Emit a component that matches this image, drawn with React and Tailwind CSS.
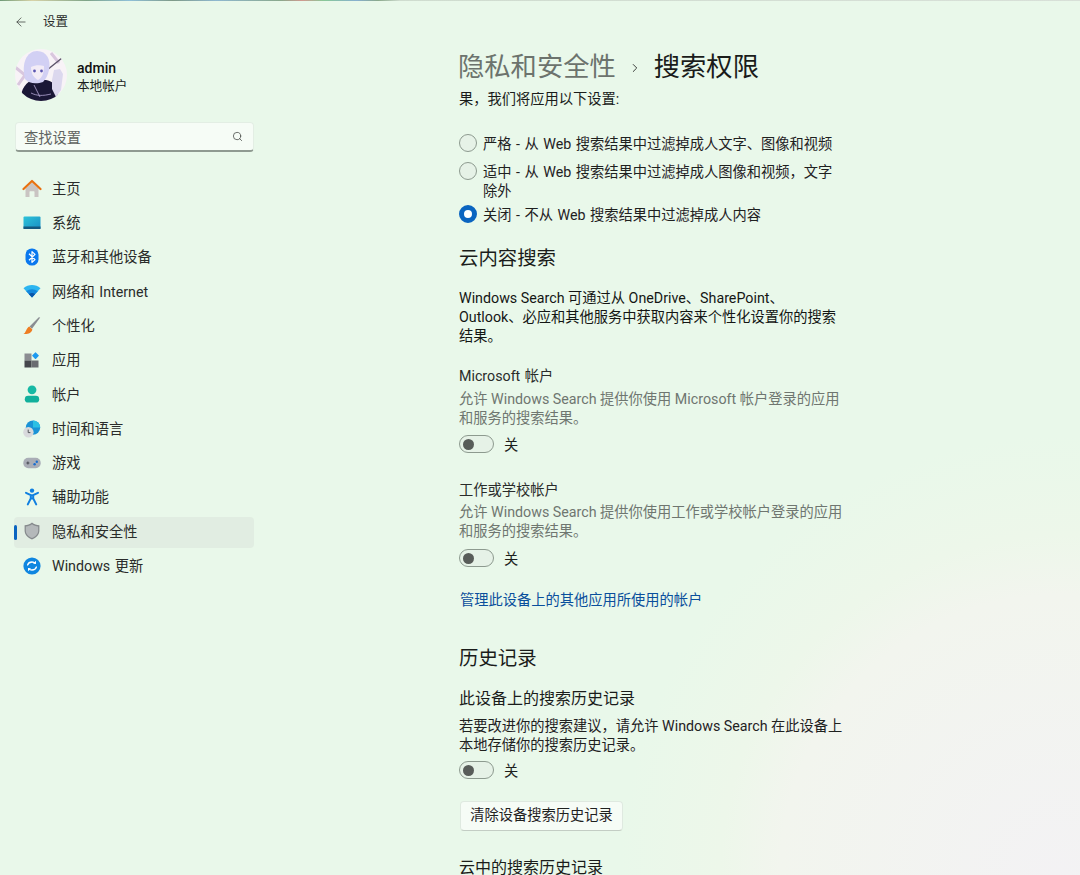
import React from "react";
import { ArrowLeft, ChevronRight, Search } from "lucide-react";

const HomeIcon = () => (
  <svg width="20" height="20" viewBox="0 0 20 20">
    <path d="M3.5 9.5 10 3.5l6.5 6V18h-4.2v-5.5H7.7V18H3.5z" fill="#c9c4c2" />
    <path d="M7.7 12.5h4.6V18H7.7z" fill="#e9f8ea" />
    <path d="M1.5 10 10 2l8.5 8" fill="none" stroke="#e8700f" strokeWidth="2.2" strokeLinecap="round" strokeLinejoin="round" />
  </svg>
);

const SystemIcon = () => (
  <svg width="18" height="14" viewBox="0 0 18 14">
    <defs>
      <linearGradient id="sysg" x1="0" y1="0" x2="1" y2="1">
        <stop offset="0" stopColor="#2cc3d9" />
        <stop offset="1" stopColor="#1a8fc4" />
      </linearGradient>
    </defs>
    <rect x="0.5" y="0.5" width="17" height="12.5" rx="1" fill="url(#sysg)" />
    <rect x="0.5" y="10.5" width="17" height="2.5" fill="#14587f" />
  </svg>
);

const BluetoothIcon = () => (
  <svg width="14" height="18" viewBox="0 0 14 18">
    <rect x="0.5" y="0.5" width="13" height="17" rx="6.3" fill="#0a78ee" />
    <path d="M4 5.8 10 11.6 7 14.4V3.6l3 2.8-6 5.8" fill="none" stroke="#fff" strokeWidth="1.2" strokeLinejoin="round" />
  </svg>
);

const WifiIcon = () => (
  <svg width="18" height="14" viewBox="0 0 18 14">
    <path d="M0.500 4.200C5.300 0 12.700 0 17.500 4.200L9 13.500z" fill="#2cb5f0" />
    <path d="M3.200 7.200c3.400-2.700 8.200-2.700 11.600 0L9 13.500z" fill="#1488dc" />
    <path d="M5.800 10c2-1.300 4.400-1.300 6.400 0L9 13.500z" fill="#0b55a8" />
  </svg>
);

const BrushIcon = () => (
  <svg width="18" height="18" viewBox="0 0 18 18">
    <path d="M17.200 0.500 15.800 0.300 6.600 9.400 9 11.800z" fill="#8a8d92" />
    <path d="M6.200 9.400 9.400 12.400C8.600 15.600 5 17.600 0.400 17 3 15.800 3.200 11 6.200 9.400z" fill="#ee7d22" />
  </svg>
);

const AppsIcon = () => (
  <svg width="16" height="16" viewBox="0 0 16 16">
    <rect x="0.500" y="1.500" width="7" height="7" fill="#8b8d92" />
    <rect x="0.500" y="8.500" width="7" height="7" fill="#45474c" />
    <rect x="7.500" y="8.500" width="7" height="7" fill="#6a6c71" />
    <rect x="9" y="1.200" width="5" height="5" rx="0.500" fill="#1d9af0" transform="rotate(45 11.500 3.700)" />
  </svg>
);

const AccountIcon = () => (
  <svg width="16" height="18" viewBox="0 0 16 18">
    <circle cx="8" cy="4.800" r="4.400" fill="#17b9a4" />
    <rect x="0.800" y="10.800" width="14.400" height="6.800" rx="3.400" fill="#12b09c" />
  </svg>
);

const TimeIcon = () => (
  <svg width="18" height="18" viewBox="0 0 18 18">
    <circle cx="10" cy="7.600" r="7.200" fill="#1b93d6" />
    <path d="M10 .4a7.200 7.200 0 0 1 7.200 7.200H10z" fill="#2cc0e4" />
    <circle cx="5.400" cy="12.200" r="5.200" fill="#d8d9dc" />
    <path d="M5.200 9.600v3h2.200" fill="none" stroke="#55585c" strokeWidth="1" />
  </svg>
);

const GameIcon = () => (
  <svg width="18" height="12" viewBox="0 0 18 12">
    <rect x="0.300" y="0.800" width="17.400" height="10.400" rx="5" fill="#a9adb6" />
    <path d="M3.400 6h3M4.900 4.500v3" stroke="#45484f" strokeWidth="1" />
    <circle cx="11.600" cy="7.200" r="1.200" fill="#1a6fd0" />
    <circle cx="13.800" cy="4.800" r="1.200" fill="#1a6fd0" />
  </svg>
);

const AccessIcon = () => (
  <svg width="16" height="18" viewBox="0 0 16 18">
    <circle cx="8" cy="2.600" r="2.200" fill="#0f7fe0" />
    <path d="M2 4.800 6.800 7.200v3.200L3.800 16.400M14 4.800 9.200 7.200v3.200l3 6M6.800 7.200h2.400v3.200H6.800z" fill="none" stroke="#0f7fe0" strokeWidth="2" strokeLinecap="round" strokeLinejoin="round" />
  </svg>
);

const ShieldIcon = () => (
  <svg width="16" height="18" viewBox="0 0 16 18">
    <path d="M8 .6C10.200 2.400 12.600 3.200 15.400 3.200V8.600c0 4.200-3.200 7.300-7.400 8.800C3.800 15.900.6 12.800.6 8.600V3.200C3.400 3.200 5.800 2.400 8 .6z" fill="#85898c" />
    <path d="M8 2.200C10 3.600 12 4.300 14.200 4.400V8.600c0 3.500-2.600 6-6.200 7.500C4.400 14.600 1.800 12.100 1.800 8.600V4.400C4 4.300 6 3.600 8 2.200z" fill="#b4b8ba" />
  </svg>
);

const UpdateIcon = () => (
  <svg width="18" height="18" viewBox="0 0 18 18">
    <circle cx="9" cy="9" r="8.600" fill="#0f86e0" />
    <path d="M4.600 8c.6-2 2.400-3 4.400-3 1.300 0 2.500.5 3.300 1.400M13.400 10c-.6 2-2.400 3-4.400 3-1.300 0-2.500-.5-3.300-1.400" fill="none" stroke="#fff" strokeWidth="1.300" strokeLinecap="round" />
    <path d="M13 3.800v3h-3zM5 14.200v-3h3z" fill="#fff" />
  </svg>
);

const navItems = [
  { label: "主页", icon: <HomeIcon /> },
  { label: "系统", icon: <SystemIcon /> },
  { label: "蓝牙和其他设备", icon: <BluetoothIcon /> },
  { label: "网络和 Internet", icon: <WifiIcon /> },
  { label: "个性化", icon: <BrushIcon /> },
  { label: "应用", icon: <AppsIcon /> },
  { label: "帐户", icon: <AccountIcon /> },
  { label: "时间和语言", icon: <TimeIcon /> },
  { label: "游戏", icon: <GameIcon /> },
  { label: "辅助功能", icon: <AccessIcon /> },
  { label: "隐私和安全性", icon: <ShieldIcon />, active: true },
  { label: "Windows 更新", icon: <UpdateIcon /> },
];

// blurred a touch, the reference avatar is a small soft picture
const Avatar = () => (
  <svg width="52" height="52" viewBox="0 0 52 52" className="rounded-full">
    <rect width="52" height="52" fill="#f8f3f7" />
    <g className="blur-[0.7px]">
      <path d="M0 18 10 26 3 36M36 4l8 10" stroke="#d9c7de" strokeWidth="3" fill="none" />
      <path d="M22 29 47 9" stroke="#5b5368" strokeWidth="1.400" />
      <path d="M5 52c1-12 6-20 14-21h12c6 1 10 5 11 10l1 11z" fill="#1a1736" />
      <path d="M37 31l2-10 6-1 3 5-2 16-5 7-4-8z" fill="#dcd8ee" />
      <path d="M10 30C6 14 12 2 22 2c10 0 14 9 12 19-1 5-3 9-6 12-6 2-14 2-18-3z" fill="#d2d0f4" />
      <path d="M16 18c4-2 9-2 13-1 0 7-2 12-6 14-4-2-7-6-7-13z" fill="#f3ecf6" />
      <circle cx="19.500" cy="22" r="1.400" fill="#5a55b0" />
      <circle cx="26.500" cy="22" r="1.400" fill="#5a55b0" />
      <path d="M16 44c6 3 12 3 20 1M19 36l6 12" stroke="#b7a9d8" strokeWidth="0.800" fill="none" />
    </g>
  </svg>
);

const Toggle = ({ className = "" }) => (
  <div className={"flex items-center " + className}>
    <div className="flex items-center w-[35px] h-[18px] rounded-full border border-[#8d9a8f] bg-[#e6f2e7] pl-[3px]">
      <div className="w-[11px] h-[11px] rounded-full bg-[#585c59]" />
    </div>
    <span className="ml-[10px] text-[14.25px] leading-[20px] translate-y-[1px] text-[#1d1f1d]">关</span>
  </div>
);

const Radio = ({ checked }) =>
  checked ? (
    <div className="shrink-0 -mt-[1px] w-[18px] h-[18px] rounded-full border-[5px] border-[#0a64c0] bg-white" />
  ) : (
    <div className="shrink-0 -mt-[1px] w-[18px] h-[18px] rounded-full border border-[#8d9a8f] bg-[#e6f2e7]" />
  );

const RadioRow = ({ checked, className = "", children }) => (
  <div className={"flex items-start gap-[6px] " + className}>
    <Radio checked={checked} />
    <span className="text-[14.25px] leading-[19px] text-[#1f211f] w-[352px]">{children}</span>
  </div>
);

export default function App() {
  return (
    <div className="w-[1080px] h-[875px] overflow-hidden flex flex-col bg-[#e9f8ea] bg-[radial-gradient(circle_at_1060px_875px,#f3f2f4_0px,#f2f5ee_280px,#edf7ea_340px,#e9f8ea_440px)] [word-spacing:1px] font-['Roboto','Noto_Sans_CJK_SC',sans-serif]">
      <div className="h-px shrink-0 bg-[linear-gradient(to_right,#6f9a78_0%,#d8d3a8_3%,#7fa488_8%,#8fc0d8_12%,#7f9a88_16%,#8fb8d0_20%,#8aa88c_26%,#d09a90_28%,#88c898_30%,#88b0d0_33%,#8aa88c_35%,#cfdccf_37%,#d8e0d8_100%)]" />
      <div className="flex-1 min-h-0 flex">
        <aside className="w-[270px] shrink-0 flex flex-col">
          <div className="flex items-center h-[40px] pl-[14px] pt-[2px]">
            <ArrowLeft size={14} strokeWidth={1.2} className="text-[#2e302e]" />
            <span className="ml-[15px] text-[12.5px] text-[#2a2c2a]">设置</span>
          </div>
          <div className="flex items-center mt-[8px] pl-[15px]">
            <Avatar />
            <div className="ml-[10px] flex flex-col translate-y-[1px]">
              <span className="text-[14px] leading-[18px] font-medium text-[#111]">admin</span>
              <span className="text-[12.6px] leading-[17px] text-[#1a1c1a]">本地帐户</span>
            </div>
          </div>
          <div className="flex items-center justify-between mt-[21px] ml-[15px] w-[239px] h-[30px] rounded-[4px] border border-[#e3eee4] border-b-[2px] border-b-[#8f9a91] bg-[#f6fcf6] pl-[8px] pr-[10px]">
            <span className="text-[14.25px] text-[#5f635f] translate-y-[2px]">查找设置</span>
            <Search size={11} strokeWidth={1.6} className="text-[#3c3f3c]" />
          </div>
          <nav className="flex flex-col gap-[3.3px] mt-[22px] ml-[14px] w-[240px]">
            {navItems.map((item) => (
              <div
                key={item.label}
                className={"relative flex items-center h-[31px] rounded-[4px] " + (item.active ? "bg-[#e1ede2]" : "")}
              >
                {item.active && <div className="absolute left-0 top-[8px] w-[3px] h-[15px] rounded-full bg-[#0a64c0]" />}
                <div className="w-[20px] h-[20px] ml-[8px] flex items-center justify-center -translate-y-[1px]">{item.icon}</div>
                <span className="ml-[10px] text-[14.25px] text-[#2a2c2a]">{item.label}</span>
              </div>
            ))}
          </nav>
        </aside>

        <main className="flex-1 flex flex-col pl-[189px] min-h-0">
          <header className="flex items-center h-[91px] pt-[43px] shrink-0">
            <span className="text-[26.3px] text-[#6c736d] -ml-[1px]">隐私和安全性</span>
            <ChevronRight size={14} strokeWidth={1.7} className="ml-[12px] mr-[12px] text-[#3a3d3a]" />
            <span className="text-[26.3px] text-[#1a1c1a]">搜索权限</span>
          </header>
          <div className="flex-1 min-h-0 overflow-hidden w-[388px]">
            <p className="text-[14.25px] leading-[19px] text-[#1a1c1a] -mt-[2px]">果，我们将应用以下设置:</p>
            <RadioRow className="mt-[26px]">严格 - 从 Web 搜索结果中过滤掉成人文字、图像和视频</RadioRow>
            <RadioRow className="mt-[9px]">适中 - 从 Web 搜索结果中过滤掉成人图像和视频，文字除外</RadioRow>
            <RadioRow checked className="mt-[5px]">关闭 - 不从 Web 搜索结果中过滤掉成人内容</RadioRow>

            <h2 className="mt-[19.5px] text-[19.4px] leading-[28px] font-normal text-[#1a1c1a]">云内容搜索</h2>
            <p className="mt-[16.5px] text-[14.25px] leading-[19px] text-[#141614] [word-spacing:0]">
              Windows Search 可通过从 OneDrive、SharePoint、
              <br />
              Outlook、必应和其他服务中获取内容来个性化设置你的搜索结果。
            </p>

            <h3 className="mt-[20px] text-[14.25px] leading-[20px] font-normal text-[#2a2c2a]">Microsoft 帐户</h3>
            <p className="mt-[4px] text-[14.25px] leading-[19px] text-[#6f7670] [word-spacing:0]">
              允许 Windows Search 提供你使用 Microsoft 帐户登录的应用和服务的搜索结果。
            </p>
            <Toggle className="mt-[6px]" />

            <h3 className="mt-[26px] text-[14.25px] leading-[20px] font-normal text-[#2a2c2a]">工作或学校帐户</h3>
            <p className="mt-[3px] text-[14.25px] leading-[19px] text-[#6f7670] [word-spacing:0]">
              允许 Windows Search 提供你使用工作或学校帐户登录的应用和服务的搜索结果。
            </p>
            <Toggle className="mt-[7px]" />

            <a className="block mt-[22px] pl-[1px] text-[14.25px] leading-[20px] text-[#0a4f9c]">管理此设备上的其他应用所使用的帐户</a>

            <h2 className="mt-[35px] text-[19.4px] leading-[28px] font-normal text-[#1a1c1a]">历史记录</h2>
            <h3 className="mt-[15px] text-[16px] leading-[22px] font-normal text-[#1a1c1a]">此设备上的搜索历史记录</h3>
            <p className="mt-[7px] text-[14.25px] leading-[19px] text-[#1f211f] [word-spacing:0]">
              若要改进你的搜索建议，请允许 Windows Search 在此设备上本地存储你的搜索历史记录。
            </p>
            <Toggle className="mt-[5px]" />
            <button className="block mt-[21px] ml-[1px] h-[30px] w-[163px] rounded-[4px] border border-[#dfe9e0] border-b-[#c3cdc4] bg-[#f6fcf6] text-[14.25px] text-[#1f211f]">
              清除设备搜索历史记录
            </button>
            <h3 className="mt-[26px] text-[16px] leading-[22px] font-normal text-[#1a1c1a]">云中的搜索历史记录</h3>
          </div>
        </main>
      </div>
    </div>
  );
}
